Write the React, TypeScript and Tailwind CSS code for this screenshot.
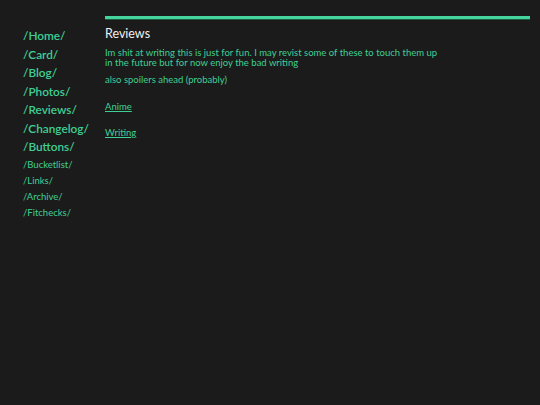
import React from "react";

const big = ["/Home/", "/Card/", "/Blog/", "/Photos/", "/Reviews/", "/Changelog/", "/Buttons/"];
const small = ["/Bucketlist/", "/Links/", "/Archive/", "/Fitchecks/"];

export default function App() {
  return (
    <div
      className="w-[540px] h-[405px] bg-[#1b1b1b] flex"
      style={{ fontFamily: "Lato, 'Noto Sans', sans-serif" }}
    >
      <nav className="w-[105px] shrink-0 pl-[23px] pt-[27px] flex flex-col">
        {big.map((t) => (
          <a key={t} className="text-[11.8px] leading-[18.5px] text-[#3fcf95] font-semibold">
            {t}
          </a>
        ))}
        {small.map((t) => (
          <a key={t} className="text-[9.5px] leading-[16px] text-[#3fcf95]">
            {t}
          </a>
        ))}
      </nav>
      <main className="w-[425px] pt-[16px] flex flex-col">
        <div className="h-[3px] bg-[#45d49b]" />
        <div className="h-[1px] bg-[#1e5a42]" />
        <h1 className="mt-[6px] text-[12.5px] leading-[16px] text-[#f0f0f0]">Reviews</h1>
        <p className="mt-[6px] text-[9.5px] leading-[10px] text-[#3fcf95] w-[340px]">
          Im shit at writing this is just for fun. I may revist some of these to touch them up in the future but for now enjoy the bad writing
        </p>
        <p className="mt-[7px] text-[9.5px] leading-[10px] text-[#3fcf95]">also spoilers ahead (probably)</p>
        <a className="mt-[17px] text-[9.5px] leading-[10px] text-[#3fcf95] underline">Anime</a>
        <a className="mt-[16px] text-[9.5px] leading-[10px] text-[#3fcf95] underline">Writing</a>
      </main>
    </div>
  );
}
